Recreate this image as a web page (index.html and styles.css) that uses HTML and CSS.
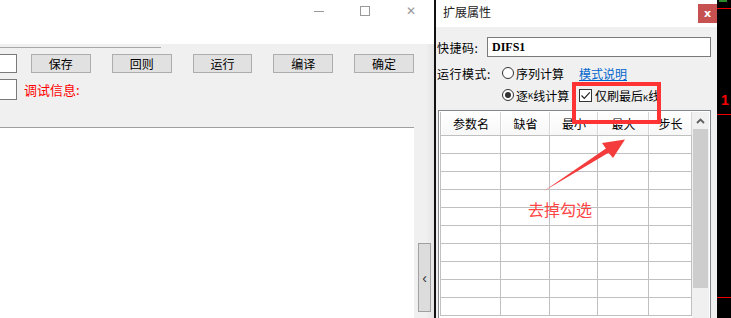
FILE: index.html
```html
<!DOCTYPE html>
<html>
<head>
    <title>扩展属性</title>
    <link rel="stylesheet" href="styles.css">
</head>
<body>
    <div class="editor">
        <div class="win-title">
            <span class="win-btn"><i class="ico-min"></i></span>
            <span class="win-btn"><i class="ico-max"></i></span>
            <span class="win-btn ico-close">&#x2715;</span>
        </div>
        <div class="editor-body">
            <div class="editor-main">
                <div class="toolbar">
                    <div class="tab-line"></div>
                    <div class="tool-row">
                        <span class="stub"></span>
                        <button class="btn first">保存</button>
                        <button class="btn">回则</button>
                        <button class="btn">运行</button>
                        <button class="btn">编译</button>
                        <button class="btn">确定</button>
                    </div>
                    <div class="tool-row">
                        <span class="stub tall"></span>
                        <span class="debug">调试信息:</span>
                    </div>
                </div>
                <div class="code-area"></div>
            </div>
            <div class="gutter">
                <button class="fold">&lsaquo;</button>
            </div>
        </div>
    </div>
    <div class="split"></div>
    <div class="dialog">
        <div class="dlg-title">
            <span>扩展属性</span>
            <button class="dlg-close">x</button>
        </div>
        <div class="dlg-row first-row">
            <span class="lbl">快捷码:</span>
            <input class="shortcut" type="text" value="DIFS1" readonly>
        </div>
        <div class="dlg-row">
            <span class="lbl">运行模式:</span>
            <span class="option"><i class="radio"></i>序列计算</span>
            <a class="link" href="#">模式说明</a>
        </div>
        <div class="dlg-row">
            <span class="lbl"></span>
            <span class="option"><i class="radio on"></i>逐<small>K</small>线计算</span>
            <span class="check">
                <i class="box">
                    <svg width="11" height="11" viewBox="0 0 11 11"><path d="M1.5 5.5 L4.3 8.3 L9.8 2.3" fill="none" stroke="#222" stroke-width="1.2"/></svg>
                </i>
                <span class="check-text">仅刷最后<small>K</small>线</span>
            </span>
        </div>
        <div class="param-frame">
            <div class="grid">
                <div class="grid-head">
                    <span class="c1">参数名</span>
                    <span class="c2">缺省</span>
                    <span class="c3">最小</span>
                    <span class="c4">最大</span>
                    <span class="c5">步长</span>
                </div>
                <div id="rows"></div>
            </div>
            <div class="vscroll">
                <div class="up">
                    <svg width="9" height="6" viewBox="0 0 9 6"><path d="M1 5 L4.5 1.5 L8 5" fill="none" stroke="#606060" stroke-width="1.8"/></svg>
                </div>
                <div class="thumb"></div>
            </div>
        </div>
    </div>
    <div class="chart">
        <span class="tick-green"></span>
        <span class="hline l1"></span>
        <span class="num">1</span>
        <span class="hline l2"></span>
        <span class="hline l3"></span>
    </div>

    <!-- annotation drawn over the screenshot -->
    <div class="mark-box"></div>
    <svg class="mark-arrow" width="731" height="318" viewBox="0 0 731 318">
        <polygon points="544,191 608.5,152.8 613,158 625,139.5 602,143 605.9,148.6" fill="#f43c3c"/>
    </svg>
    <span class="mark-text">去掉勾选</span>

    <script>
        var rows = '';
        for (var i = 0; i < 10; i++) {
            rows += '<div class="grid-row"><span class="c1"></span><span class="c2"></span><span class="c3"></span><span class="c4"></span><span class="c5"></span></div>';
        }
        document.getElementById('rows').innerHTML = rows;
    </script>
</body>
</html>
```

FILE: styles.css
```css
* {
    box-sizing: border-box;
}
body {
    margin: 0;
    width: 731px;
    height: 318px;
    overflow: hidden;
    position: relative;
    display: flex;
    font-family: "Noto Sans CJK SC", "Noto Sans", sans-serif;
    font-size: 12px;
    color: #000;
    background: #f0f0f0;
}
small {
    font-size: 8px;
}

/* left editor window */
.editor {
    width: 434px;
    display: flex;
    flex-direction: column;
}
.win-title {
    height: 44px;
    flex-shrink: 0;
    background: #fff;
    display: flex;
    justify-content: flex-end;
    align-items: flex-start;
}
.win-btn {
    width: 46px;
    height: 24px;
    display: flex;
    align-items: center;
    justify-content: center;
    color: #999;
}
.ico-min {
    width: 10px;
    height: 1px;
    background: #999;
    margin-top: -2px;
}
.ico-max {
    width: 10px;
    height: 10px;
    border: 1px solid #999;
    margin-top: -2px;
}
.ico-close {
    font-size: 12px;
    line-height: 1;
    font-family: "DejaVu Sans", sans-serif;
    padding-bottom: 3px;
}
.editor-body {
    flex: 1;
    display: flex;
}
.editor-main {
    width: 414px;
    display: flex;
    flex-direction: column;
}
.toolbar {
    height: 84px;
    flex-shrink: 0;
    border-bottom: 1px solid #a0a0a0;
    background: #f0f0f0;
}
.tab-line {
    width: 161px;
    height: 1px;
    margin-top: 3px;
    background: #a8a8a8;
}
.tool-row {
    display: flex;
    align-items: center;
    margin-top: 6px;
}
.stub {
    width: 17px;
    height: 19px;
    background: #fff;
    border: 1px solid #7a7a7a;
    border-left: none;
}
.stub.tall {
    height: 21px;
}
.btn {
    width: 60px;
    height: 19px;
    margin: 0 0 0 21px;
    padding: 0;
    background: #e1e1e1;
    border: 1px solid #adadad;
    font-family: "Noto Sans CJK SC", sans-serif;
    font-size: 12px;
    line-height: 16px;
}
.btn.first {
    margin-left: 14px;
}
.debug {
    color: #f00;
    margin-left: 7px;
    font-size: 13px;
}
.code-area {
    flex: 1;
    background: #fff;
}
.gutter {
    width: 20px;
    background: linear-gradient(to right, #f0f0f0, #f0f0f0 60%, #e4e4e4);
    display: flex;
    flex-direction: column;
    justify-content: flex-end;
    padding: 0 0 6px 4px;
}
.fold {
    width: 13px;
    height: 69px;
    padding: 0;
    background: #dcdcdc;
    border: 1px solid #a0a0a0;
    font-size: 14px;
    line-height: 1;
    color: #333;
}
.split {
    width: 2px;
    background: #111;
}

/* dialog */
.dialog {
    width: 281px;
    background: #f0f0f0;
    display: flex;
    flex-direction: column;
}
.dialog > * {
    flex-shrink: 0;
}
.dlg-title {
    height: 27px;
    background: #fff;
    display: flex;
    align-items: flex-start;
    justify-content: space-between;
    padding: 3px 0 0 7px;
    font-size: 12px;
    color: #222;
}
.dlg-close {
    width: 19px;
    height: 19px;
    margin-top: 1px;
    padding: 0;
    border: none;
    background: #c75050;
    color: #fff;
    font-family: "DejaVu Sans", sans-serif;
    font-weight: bold;
    font-size: 11px;
    line-height: 17px;
}
.dlg-row {
    height: 22px;
    display: flex;
    align-items: center;
    padding-left: 1px;
}
.first-row {
    margin: 10px 0 5px;
    height: 20px;
}
.dlg-row .lbl {
    width: 65px;
    letter-spacing: 0.5px;
}
.first-row .lbl {
    width: 50px;
}
.shortcut {
    width: 224px;
    height: 20px;
    border: 1px solid #7a7a7a;
    background: #fff;
    padding: 0 4px;
    font-family: "Liberation Serif", serif;
    font-weight: bold;
    font-size: 12px;
}
.option {
    width: 77px;
    display: flex;
    align-items: center;
}
.radio {
    width: 12px;
    height: 12px;
    border: 1px solid #333;
    border-radius: 50%;
    background: #fff;
    margin-right: 2px;
    display: flex;
    align-items: center;
    justify-content: center;
}
.radio.on::after {
    content: "";
    width: 6px;
    height: 6px;
    border-radius: 50%;
    background: #333;
}
.link {
    color: #0066cc;
    text-decoration: underline;
}
.check {
    display: flex;
    align-items: center;
}
.box {
    width: 13px;
    height: 13px;
    border: 1px solid #333;
    background: #fff;
    display: flex;
    align-items: center;
    justify-content: center;
    margin-right: 3px;
}
.check-text {
    width: 63px;
    overflow: hidden;
    white-space: nowrap;
}

/* parameter table */
.param-frame {
    margin: 4px 0 0 2px;
    width: 273px;
    height: 220px;
    border: 1px solid #828790;
    padding: 1px;
    background: #fff;
    display: flex;
    align-items: flex-start;
}
.grid {
    width: 252px;
    border-left: 1px solid #c0c0c0;
}
.grid-head,
.grid-row {
    display: flex;
}
.grid-head {
    height: 24px;
    border-bottom: 1px solid #c0c0c0;
    background: linear-gradient(#fff, #f7f7f7);
}
.grid-head span {
    display: flex;
    align-items: center;
    justify-content: center;
    border-right: 1px solid #d6d6d6;
    border-left: 1px solid #fff;
}
.grid-row {
    height: 18px;
    border-bottom: 1px solid #c0c0c0;
}
.grid-row span {
    border-right: 1px solid #c0c0c0;
}
.c1 { width: 60px; }
.c2 { width: 49px; }
.c3 { width: 48px; }
.c4 { width: 51px; }
.c5 { width: 43px; }
.vscroll {
    width: 17px;
    height: 216px;
    background: #f0f0f0;
    padding: 0 1px;
}
.up {
    height: 17px;
    display: flex;
    align-items: center;
    justify-content: center;
}
.thumb {
    height: 159px;
    background: #cdcdcd;
}

/* chart strip */
.chart {
    width: 14px;
    background: #000;
    position: relative;
}
.tick-green {
    position: absolute;
    left: 2px;
    top: 0;
    width: 8px;
    height: 2px;
    background: #2a8a2a;
}
.hline {
    position: absolute;
    left: 0;
    width: 14px;
    height: 1px;
    background: #e00;
}
.l1 { top: 8px; }
.l2 { top: 114px; }
.l3 { top: 297px; }
.num {
    position: absolute;
    left: 4px;
    top: 93px;
    color: #f00;
    font-family: "Liberation Sans", sans-serif;
    font-weight: bold;
    font-size: 14px;
    line-height: 1;
}

/* annotation */
.mark-box {
    position: absolute;
    left: 572px;
    top: 82px;
    width: 89px;
    height: 42px;
    border: 4px solid #f33;
}
.mark-arrow {
    position: absolute;
    left: 0;
    top: 0;
}
.mark-text {
    position: absolute;
    left: 528px;
    top: 198px;
    font-size: 16px;
    line-height: 22px;
    color: #f44;
}
```
